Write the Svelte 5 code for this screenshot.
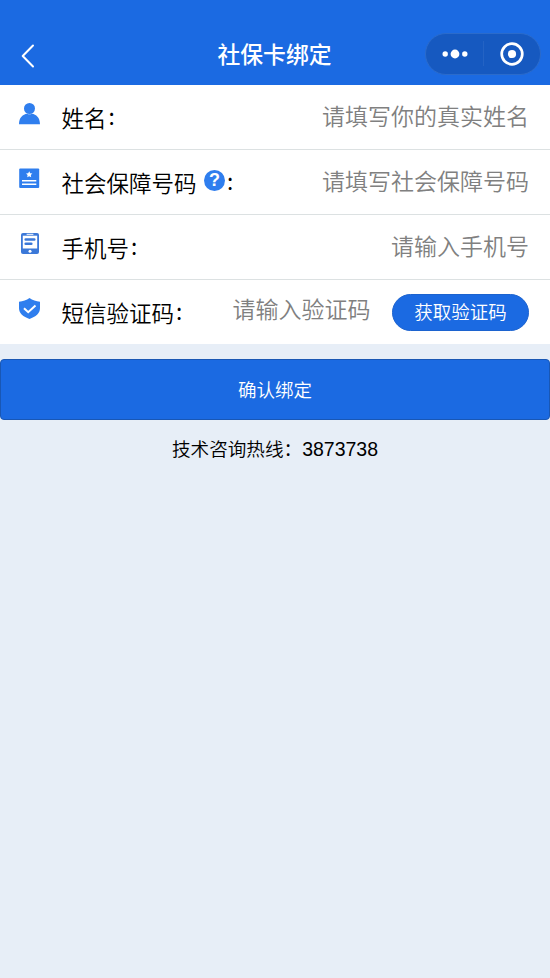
<script lang="ts">
  const fields = [
    { icon: "user", label: "姓名", hint: "请填写你的真实姓名" },
    { icon: "card", label: "社会保障号码", hint: "请填写社会保障号码", help: true },
    { icon: "phone", label: "手机号", hint: "请输入手机号" },
    { icon: "shield", label: "短信验证码", hint: "请输入验证码", code: true },
  ];
</script>

<main class="page">
  <header class="navbar">
    <svg class="back" width="16" height="26" viewBox="0 0 16 26">
      <path d="M13 2.5 2.7 13 13 23.5" fill="none" stroke="#fff" stroke-width="2" stroke-linecap="round" stroke-linejoin="round" />
    </svg>
    <h1>社保卡绑定</h1>
    <div class="capsule">
      <svg width="26" height="12" viewBox="0 0 26 12" fill="#fff">
        <circle cx="3.2" cy="6" r="2.7" />
        <circle cx="13" cy="6" r="4.4" />
        <circle cx="22.8" cy="6" r="2.7" />
      </svg>
      <span class="divider"></span>
      <svg width="24" height="24" viewBox="0 0 24 24">
        <circle cx="12" cy="12" r="10.3" fill="none" stroke="#fff" stroke-width="2.7" />
        <circle cx="12" cy="12" r="4.1" fill="#fff" />
      </svg>
    </div>
  </header>

  <section class="form">
    {#each fields as field}
      <div class="row">
        <svg class="icon" width="22" height="22" viewBox="0 0 22 22">
          {#if field.icon === "user"}
            <circle cx="10.5" cy="5.5" r="5.500" fill="#2f7eee" />
            <path d="M0 21.2C0 14.500 4 11.200 8 10.700q2.500 1 5 0c4 .5 8 3.800 8 10.500Z" fill="#2f7eee" />
          {:else if field.icon === "card"}
            <rect x=".2" y=".5" width="20" height="19.500" rx="1" fill="#2f7eee" />
            <path d="m10.200 3.200 1 2 2.200.3-1.600 1.600.4 2.200-2-1-2 1 .4-2.200L7 5.500l2.200-.3Z" fill="#fff" />
            <path d="M3 12.700h14.300M3 16.200h14.300" stroke="#fff" stroke-width="1.500" />
          {:else if field.icon === "phone"}
            <rect x="2" y="0" width="18" height="21" rx="2" fill="#3b78d8" />
            <path d="M3.800 2.700h14.400v12.800H3.800z" fill="#fff" />
            <path d="M8 1.300h6" stroke="#fff" stroke-width="1" stroke-linecap="round" />
            <path d="M6.700 6.500h8.600M6.700 10.700h5.600" stroke="#3b78d8" stroke-width="2.600" stroke-linecap="round" />
            <circle cx="11" cy="18.200" r="1.500" fill="#fff" />
          {:else}
            <path d="M10.500 0C13.500 2.200 17 3.400 21 3.800v6.500c0 5-4.200 8.500-10.500 10.700C4.200 18.800 0 15.300 0 10.300V3.800C4 3.400 7.500 2.200 10.500 0Z" fill="#2f7eee" />
            <path d="m5 10.200 4.200 4 7.300-6.800" fill="none" stroke="#fff" stroke-width="2" />
          {/if}
        </svg>
        <span class="label">{field.label}</span>
        {#if field.help}
          <span class="help">?</span>
        {/if}
        <span class="colon">:</span>
        <span class="hint" class:short={field.code}>{field.hint}</span>
        {#if field.code}
          <button class="send">获取验证码</button>
        {/if}
      </div>
    {/each}
  </section>

  <button class="submit">确认绑定</button>
  <p class="hotline">技术咨询热线：<span>3873738</span></p>
</main>

<style>
  :global(body) {
    background: #e7eef7;
  }
  .page {
    min-height: 978px;
    background: #e7eef7;
    font-family: "Noto Sans CJK SC", sans-serif;
    color: #000;
  }
  .navbar {
    box-sizing: border-box;
    height: 85px;
    padding: 32px 9px 10px 20px;
    display: grid;
    grid-template-columns: 1fr auto 1fr;
    align-items: center;
    background: #1b6ae2;
    color: #fff;
  }
  .back {
    margin-top: 4px;
  }
  h1 {
    margin: 0 0 0 -12px;
    font-size: 22.800px;
    line-height: 34px;
    font-weight: 500;
  }
  .capsule {
    box-sizing: border-box;
    justify-self: end;
    width: 116px;
    height: 42px;
    padding: 0 16px;
    display: flex;
    align-items: center;
    justify-content: space-between;
    border: 1px solid #2b6bcb;
    border-radius: 21px;
    background: #1659c0;
  }
  .divider {
    width: 1px;
    height: 25px;
    margin-right: 2px;
    background: #2463c4;
  }
  .form {
    background: #fff;
  }
  .row {
    box-sizing: border-box;
    height: 65px;
    padding: 0 21px 0 19px;
    display: flex;
    align-items: center;
    border-bottom: 1px solid #dce1e2;
  }
  .row:last-child {
    height: 64px;
    border-bottom: 0;
  }
  .icon {
    flex: none;
    margin: -6px 20.500px 0 0;
  }
  .label {
    margin-top: -1px;
    font-size: 22.500px;
    line-height: 34px;
    font-weight: 350;
  }
  .help {
    width: 21px;
    height: 21px;
    margin: -4px 0 0 7.500px;
    border-radius: 50%;
    background: #2f7eee;
    color: #fff;
    font: bold 18px/21px "Liberation Sans", sans-serif;
    text-align: center;
  }
  .colon {
    margin: -5px 0 0 2px;
    font-size: 22.500px;
    line-height: 34px;
  }
  .hint {
    margin: -5px 0 0 auto;
    color: #808080;
    font-size: 23px;
    line-height: 34px;
    font-weight: 350;
  }
  .hint.short {
    margin-top: -9px;
  }
  button {
    padding: 0;
    font-family: inherit;
    font-size: 18.500px;
    font-weight: 350;
    color: #fff;
    background: #1b6ae2;
  }
  .send {
    width: 137px;
    height: 37px;
    padding-bottom: 2px;
    margin-left: 21.500px;
    border: 1px solid #1c63cf;
    border-radius: 19px;
  }
  .submit {
    display: block;
    width: 100%;
    height: 61px;
    padding-bottom: 2px;
    margin-top: 15px;
    border: 1px solid #1957b4;
    border-radius: 4px;
  }
  .hotline {
    margin: 14px 0 0;
    text-align: center;
    font-size: 18.600px;
    line-height: 28px;
    font-weight: 350;
  }
  .hotline span {
    font-family: "Liberation Sans", sans-serif;
    font-size: 19.500px;
  }
</style>
